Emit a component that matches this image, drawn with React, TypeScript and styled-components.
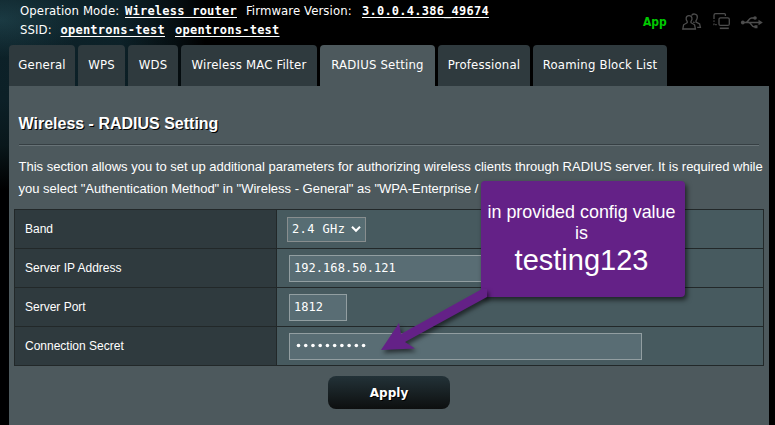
import React from 'react';
import styled, { createGlobalStyle } from 'styled-components';

const GlobalStyle = createGlobalStyle`
  * { box-sizing: border-box; }
  body {
    margin: 0;
    background: #000;
    color: #fff;
    font-family: "Liberation Sans", Arial, sans-serif;
    font-size: 12px;
    overflow: hidden;
  }
`;

const tahoma = '"DejaVu Sans Condensed", "DejaVu Sans", Tahoma, sans-serif';
const mono = '"DejaVu Sans Mono", "Lucida Console", monospace';

const Page = styled.div`
  position: relative;
  width: 775px;
  height: 425px;
  overflow: hidden;
  display: flex;
  flex-direction: column;
  padding: 0 6px 0 9px;
  background:
    radial-gradient(ellipse 90px 38px at 0 20px, rgba(38, 78, 88, 0.55), transparent),
    linear-gradient(90deg, transparent 0, transparent 120px, rgba(0, 0, 0, 0.6) 178px, #000 205px),
    linear-gradient(180deg, #0d2229 0, #0c2027 100px, #09171b 145px, #000 190px),
    #000;
`;

const Header = styled.header`
  display: flex;
  justify-content: space-between;
  height: 45px;
  padding: 1px 3px 0 11px;
  font-family: ${tahoma};
`;

const Info = styled.div`
  display: flex;
  flex-direction: column;
`;

const InfoRow = styled.div`
  display: flex;
  align-items: baseline;
  height: 19px;
  line-height: 19px;
  font-size: 13px;
  font-stretch: condensed;
  white-space: nowrap;
`;

const InfoLabel = styled.span<{ $w: number }>`
  width: ${(p) => p.$w}px;
  letter-spacing: 0.1px;
`;

const InfoLink = styled.a<{ $gap?: number }>`
  font: bold 12px/19px ${mono};
  letter-spacing: 0.24px;
  text-decoration: underline;
  text-underline-offset: 2px;
  margin-right: ${(p) => p.$gap ?? 0}px;
`;

const Status = styled.div`
  display: flex;
  align-items: center;
  height: 41px;
  svg { display: block; }
`;

const AppLabel = styled.span`
  width: 39px;
  color: #00c800;
  font-weight: bold;
  font-size: 12px;
`;

const Tabs = styled.nav`
  display: flex;
  gap: 3px;
  height: 41px;
`;

const Tab = styled.div<{ $w: number; $active?: boolean }>`
  display: flex;
  justify-content: center;
  width: ${(p) => p.$w}px;
  border-radius: 4px 4px 0 0;
  background: ${(p) => (p.$active ? '#4d595d' : '#2f3a3e')};
  font-family: ${tahoma};
  font-size: 13px;
  font-stretch: condensed;
  letter-spacing: 0.2px;
  line-height: 39px;
  white-space: nowrap;
`;

const Panel = styled.main`
  display: flex;
  flex-direction: column;
  height: 339px;
  padding: 0 5px;
  background: #4d595d;
`;

const Title = styled.h1`
  height: 58px;
  margin: 0 4.5px;
  padding-top: 28px;
  font-size: 16px;
  line-height: 19px;
  text-shadow: 1px 1px 0 #000;
`;

const Divider = styled.div`
  height: 2px;
  margin: 0 5px;
  border-top: 1px solid #363f43;
  border-bottom: 1px solid #687377;
`;

const Description = styled.p`
  height: 63px;
  margin: 0 4.5px;
  padding-top: 10px;
  font-size: 13px;
  line-height: 22px;
  white-space: nowrap;
`;

const Form = styled.div`
  display: flex;
  flex-direction: column;
  width: 750px;
  border: 1px solid #222829;
  border-bottom: 0;
`;

const Row = styled.div`
  display: flex;
  height: 39px;
  border-bottom: 1px solid #222829;
`;

const RowLabel = styled.div`
  width: 262px;
  padding-left: 10px;
  border-right: 1px solid #222829;
  background: #2f3a3e;
  line-height: 38px;
`;

const RowValue = styled.div<{ $inset: number }>`
  display: flex;
  flex: 1;
  align-items: center;
  padding-left: ${(p) => p.$inset}px;
  background: #475a5f;
`;

const Select = styled.div`
  display: flex;
  align-items: center;
  justify-content: space-between;
  width: 79px;
  height: 25px;
  margin-top: 1px;
  padding: 0 4px 1px 4px;
  border: 1px solid #888e8f;
  background: #576d73;
  font: 12px ${mono};
  letter-spacing: 0.4px;
`;

const Field = styled.div<{ $w: number }>`
  width: ${(p) => p.$w}px;
  height: 27px;
  margin-top: 1px;
  padding-left: 4px;
  border: 1px solid #929ea1;
  background: #596d74;
  font: 12px/24px ${mono};
  letter-spacing: 0.05px;
  svg { display: block; }
`;

const Apply = styled.button`
  align-self: center;
  width: 122px;
  height: 33px;
  margin: 10px 0 0;
  padding: 0;
  border: 0;
  border-radius: 8px;
  background: linear-gradient(180deg, #233238 0%, #0d0f0f 100%);
  color: #fff;
  font: bold 12px "DejaVu Sans", Verdana, sans-serif;
  text-shadow: 1px 1px 0 #000;
`;

const Callout = styled.aside`
  position: absolute;
  left: 481px;
  top: 181px;
  width: 204px;
  height: 116px;
  padding: 21px 3px 0 0;
  border-radius: 4px;
  background: #642187;
  box-shadow: 2px 3px 5px rgba(0, 0, 0, 0.6);
  font-size: 17.900px;
  line-height: 21px;
  text-align: center;
  white-space: nowrap;
`;

const Secret = styled.div`
  font-size: 29px;
  line-height: 33px;
`;

const Arrow = styled.svg`
  position: absolute;
  left: 370px;
  top: 270px;
  filter: drop-shadow(2px 3px 2px rgba(0, 0, 0, 0.55));
`;

const TABS = [
  { name: 'General', width: 66 },
  { name: 'WPS', width: 47 },
  { name: 'WDS', width: 50 },
  { name: 'Wireless MAC Filter', width: 136 },
  { name: 'RADIUS Setting', width: 115, active: true },
  { name: 'Professional', width: 92 },
  { name: 'Roaming Block List', width: 134 },
];

const StatusIcons = () => (
  <svg width="84" height="20" viewBox="0 0 84 20" fill="none" stroke="#4d4d4d" strokeWidth="1.3">
    <path d="M5.200 9.400C3.600 7.600 3.500 3.600 7 3.600s3.600 4 2 5.800v1.300l3.600 2.100.8 4.200H.8l.8-4.200 3.600-2.100z" />
    <path d="M9.600 3.600C10.400 1.200 15.600 1.400 15.300 5.200c-.1 1.600-.6 2.700-1.300 3.500v1.300l3.600 1.900.8 3.500h-3.200M11.300 9.900l1.300.8" />
    <path d="M32 7V3.200c0-1 .6-1.600 1.600-1.600h8.800c.7 0 1 .3 1 1V4" />
    <path d="M32 8.500v1.200M32 11.400v1.300h3" strokeDasharray="1.500 1" />
    <rect x="37" y="5.800" width="10.300" height="7.600" rx="1.500" />
    <path d="M37.800 16.300h9" strokeWidth="1.600" />
    <path d="M60 10.500h18M63.500 10.500c3 0 3-4.500 6-4.500h3M66.500 10.500c3 0 3 4.300 5.500 4.300h2" strokeWidth="1.500" />
    <circle cx="60.800" cy="10.500" r="1.900" fill="#4d4d4d" stroke="none" />
    <circle cx="73" cy="6" r="1.800" fill="#4d4d4d" stroke="none" />
    <path d="M72.500 13.300h3v3h-3zM76.500 7.800l4.300 2.700-4.300 2.700z" fill="#4d4d4d" stroke="none" />
  </svg>
);

const PasswordDots = () => (
  <svg width="74" height="24" viewBox="0 0 74 24" fill="#fff">
    {Array.from({ length: 10 }, (_, i) => (
      <circle key={i} cx={4.500 + i * 7.230} cy="11.500" r="1.800" />
    ))}
  </svg>
);

export default function App() {
  return (
    <Page>
      <GlobalStyle />
      <Header>
        <Info>
          <InfoRow>
            <InfoLabel $w={105}>Operation Mode:</InfoLabel>
            <InfoLink $gap={9}>Wireless router</InfoLink>
            <InfoLabel $w={116}>Firmware Version:</InfoLabel>
            <InfoLink>3.0.0.4.386_49674</InfoLink>
          </InfoRow>
          <InfoRow>
            <InfoLabel $w={40.5}>SSID:</InfoLabel>
            <InfoLink $gap={10}>opentrons-test</InfoLink>
            <InfoLink>opentrons-test</InfoLink>
          </InfoRow>
        </Info>
        <Status>
          <AppLabel>App</AppLabel>
          <StatusIcons />
        </Status>
      </Header>
      <Tabs>
        {TABS.map((t) => (
          <Tab key={t.name} $w={t.width} $active={t.active}>{t.name}</Tab>
        ))}
      </Tabs>
      <Panel>
        <Title>Wireless - RADIUS Setting</Title>
        <Divider />
        <Description>
          This section allows you to set up additional parameters for authorizing wireless clients through RADIUS server. It is required while
          <br />
          you select "Authentication Method" in "Wireless - General" as "WPA-Enterprise /
        </Description>
        <Form>
          <Row>
            <RowLabel>Band</RowLabel>
            <RowValue $inset={10}>
              <Select>
                2.4 GHz
                <svg width="10" height="8" viewBox="0 0 10 8" fill="none" stroke="#fff" strokeWidth="2">
                  <path d="M1 1.800l4 4 4-4" />
                </svg>
              </Select>
            </RowValue>
          </Row>
          <Row>
            <RowLabel>Server IP Address</RowLabel>
            <RowValue $inset={12}><Field $w={353}>192.168.50.121</Field></RowValue>
          </Row>
          <Row>
            <RowLabel>Server Port</RowLabel>
            <RowValue $inset={12}><Field $w={58}>1812</Field></RowValue>
          </Row>
          <Row>
            <RowLabel>Connection Secret</RowLabel>
            <RowValue $inset={12}><Field $w={353}><PasswordDots /></Field></RowValue>
          </Row>
        </Form>
        <Apply>Apply</Apply>
      </Panel>
      <Callout>
        in provided config value
        <br />
        is
        <Secret>testing123</Secret>
      </Callout>
      <Arrow width="125" height="90" viewBox="0 0 125 90" fill="#642187">
        <path d="M112 19L31 64 29 53 11 80l34-1.500L35 72l82-45V19z" />
      </Arrow>
    </Page>
  );
}
